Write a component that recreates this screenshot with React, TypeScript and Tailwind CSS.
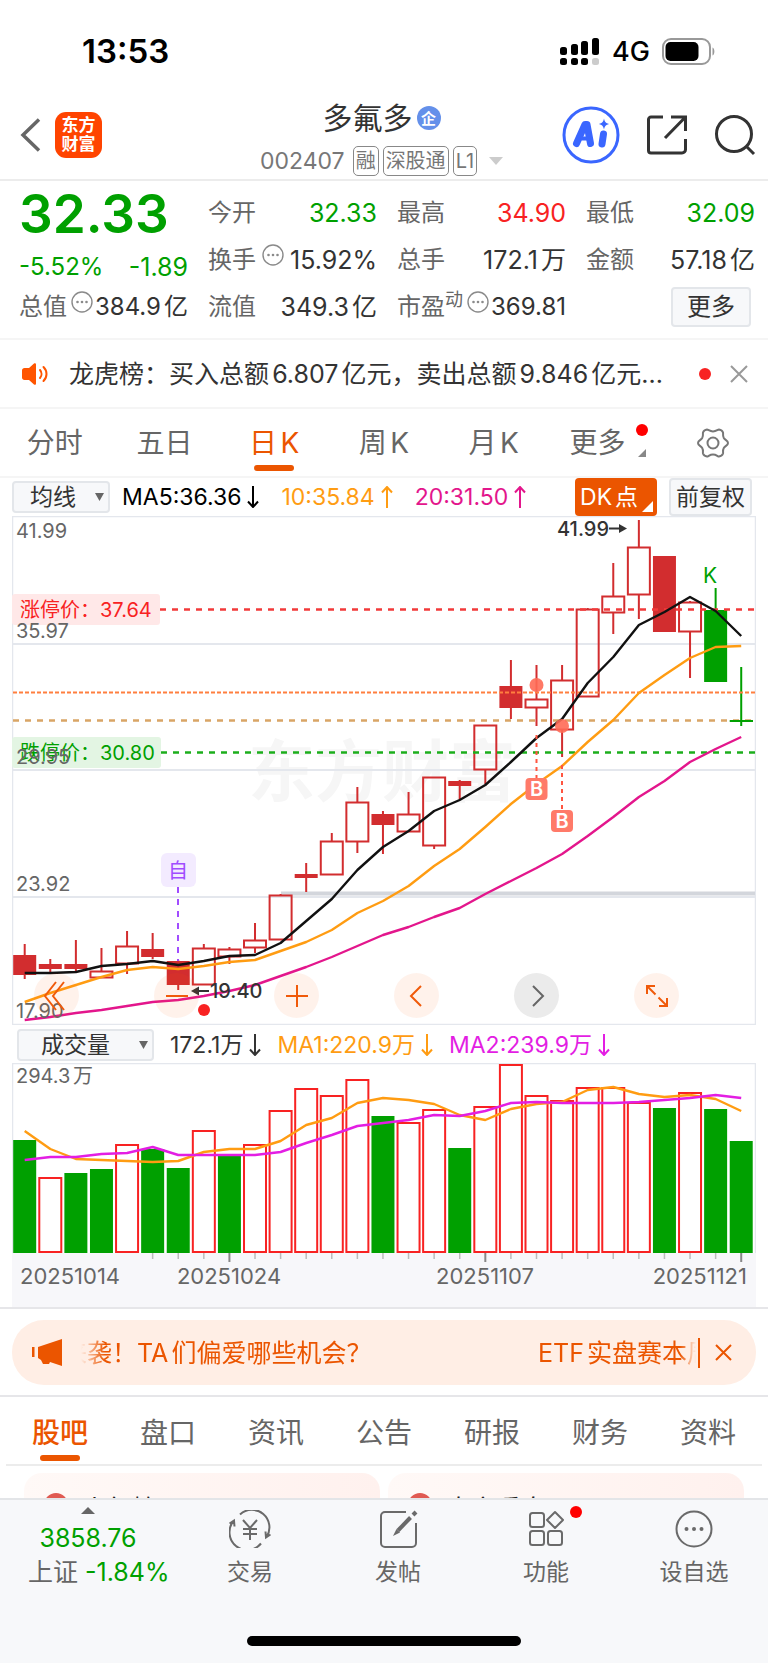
import { useState } from "react";
import type { ReactNode } from "react";
import { clsx } from "clsx";

const RED = "#d22d2f";
const GREEN = "#00a000";
const STEP = 25.59;
const FIRST_X = 24.7;
const BODY = 23;

const xAt = (i: number) => FIRST_X + i * STEP;
const toPoints = (ys: number[]) => ys.map((y, i) => `${xAt(i).toFixed(1)},${y}`).join(" ");

type Kind = "hollow" | "solid" | "down";
// high, body top, body bottom, low, kind
type Candle = [number, number, number, number, Kind];

const candles: Candle[] = [
  [944, 955, 975, 979, "solid"],
  [959, 964, 969, 972, "solid"],
  [940, 964, 969, 972, "solid"],
  [948, 971, 978, 978, "hollow"],
  [931, 946, 964, 974, "hollow"],
  [933, 949, 957, 959, "solid"],
  [960, 961, 985, 990, "solid"],
  [944, 948, 985, 985, "hollow"],
  [947, 949, 957, 964, "hollow"],
  [923, 940, 948, 953, "hollow"],
  [894, 895, 940, 940, "hollow"],
  [863, 874, 878, 892, "solid"],
  [833, 841, 875, 875, "hollow"],
  [787, 802, 842, 853, "hollow"],
  [811, 814, 825, 854, "solid"],
  [792, 814, 832, 832, "hollow"],
  [777, 777, 846, 849, "hollow"],
  [780, 781, 786, 800, "solid"],
  [725, 725, 770, 784, "hollow"],
  [660, 686, 708, 719, "solid"],
  [665, 699, 708, 726, "hollow"],
  [665, 680, 730, 757, "hollow"],
  [608, 609, 697, 697, "hollow"],
  [563, 596, 613, 634, "hollow"],
  [520, 547, 595, 619, "hollow"],
  [556, 556, 632, 632, "solid"],
  [601, 602, 632, 678, "hollow"],
  [588, 610, 682, 682, "down"],
  [667, 720, 722, 726, "down"],
];

const ma5 = [
  973, 973, 972, 966, 964, 961, 965, 961, 956, 955, 943, 921, 899, 870, 847, 831, 811, 800, 785, 762,
  738, 719, 683, 657, 625, 612, 597, 611, 636,
];
const ma10 = [
  1002, 993, 985, 977, 970, 967, 969, 966, 962, 960, 951, 942, 930, 913, 901, 886, 866, 849, 827, 804,
  784, 766, 742, 720, 693, 675, 658, 647, 646,
];
const ma20 = [
  1020, 1017, 1013, 1010, 1006, 1002, 1000, 996, 991, 985, 976, 967, 957, 946, 935, 927, 917, 908, 894,
  881, 868, 854, 836, 817, 797, 781, 762, 749, 737,
];

// bar top, rising
const volumes: [number, boolean][] = [
  [1140, false], [1178, true], [1173, false], [1169, false], [1145, true], [1149, false], [1168, false],
  [1131, true], [1155, false], [1145, true], [1111, true], [1089, true], [1096, true], [1080, true],
  [1116, false], [1123, true], [1110, true], [1148, false], [1107, true], [1065, true], [1096, true],
  [1101, true], [1088, true], [1088, true], [1103, true], [1108, false], [1093, true], [1109, false],
  [1141, false],
];
const volMa1 = [
  1131, 1149, 1159, 1160, 1161, 1162, 1161, 1152, 1149, 1149, 1141, 1125, 1118, 1103, 1098, 1100, 1104,
  1115, 1120, 1109, 1104, 1102, 1090, 1087, 1094, 1097, 1095, 1099, 1111,
];
const volMa2 = [
  1160, 1157, 1157, 1154, 1153, 1147, 1155, 1155, 1155, 1155, 1152, 1143, 1135, 1126, 1123, 1120, 1115,
  1116, 1111, 1103, 1102, 1103, 1103, 1103, 1102, 1100, 1098, 1095, 1098,
];

function MoreDot() {
  return (
    <svg viewBox="0 0 22 22" className="h-[22px] w-[22px] shrink-0 self-start" aria-hidden="true">
      <circle cx="11" cy="11" r="10" fill="none" stroke="#8a8a8a" strokeWidth="1.4" />
      <circle cx="6.5" cy="11" r="1.3" fill="#8a8a8a" />
      <circle cx="11" cy="11" r="1.3" fill="#8a8a8a" />
      <circle cx="15.5" cy="11" r="1.3" fill="#8a8a8a" />
    </svg>
  );
}

function StatusBar() {
  return (
    <div className="flex h-[88px] items-center justify-between pt-3.5 pl-[82px] pr-[52px] text-black">
      <span className="text-[33px] font-semibold leading-none">13:53</span>
      <div className="flex items-center gap-3">
        <svg viewBox="0 0 40 28" className="h-7 w-10" aria-hidden="true">
          <rect x="0" y="10" width="7" height="8" rx="2.5" />
          <rect x="11" y="7" width="7" height="11" rx="2.5" />
          <rect x="21" y="4" width="7" height="14" rx="2.5" />
          <rect x="32" y="1" width="7" height="17" rx="2.5" />
          <rect x="0" y="21" width="7" height="7" rx="2.5" />
          <rect x="11" y="21" width="7" height="7" rx="2.5" />
          <rect x="21" y="21" width="7" height="7" rx="2.5" />
          <rect x="32" y="21" width="7" height="7" rx="2.5" fill="#ccc" />
        </svg>
        <span className="text-[27px] font-medium leading-none">4G</span>
        <svg viewBox="0 0 54 27" className="h-[27px] w-[54px]" aria-hidden="true">
          <rect x="1" y="1" width="47" height="25" rx="8" fill="none" stroke="#999" strokeWidth="2" />
          <rect x="3.5" y="4" width="33" height="19" rx="5" />
          <path d="M50.500 9.500c2.500 1 2.500 7 0 8z" fill="#999" />
        </svg>
      </div>
    </div>
  );
}

function Tag({ children }: { children: ReactNode }) {
  return (
    <span className="flex h-[30px] items-center rounded-[5px] border-[1.5px] border-[#888] px-0.5 text-[20px] leading-none">
      {children}
    </span>
  );
}

function Header() {
  return (
    <header className="relative flex h-[93px] items-center justify-between border-b-2 border-[#ececec] pl-5 pr-3 pt-[3px]">
      <div className="flex items-center gap-3.5">
        <button type="button" aria-label="返回">
          <svg viewBox="0 0 21 34" className="h-[34px] w-[21px]" fill="none" stroke="#666" strokeWidth="3.500">
            <path d="M19 1.500 3 17l16 15.500" />
          </svg>
        </button>
        <a
          href="#home"
          className="grid h-[46px] w-[47px] place-content-center rounded-[11px] bg-[#ff4400] text-[17px] font-bold leading-[19px] text-white"
        >
          <span>东方</span>
          <span>财富</span>
        </a>
      </div>
      <div className="absolute left-[260px] top-2.5 flex flex-col items-center">
        <h1 className="flex items-center gap-1 text-[30px] leading-[40px] text-[#333]">
          多氟多
          <span className="grid h-6 w-6 place-content-center rounded-full bg-[#6490ea] text-[15px] font-bold leading-none text-white">
            企
          </span>
        </h1>
        <div className="mt-2 flex items-center gap-1 text-[#777]">
          <span className="mr-1 text-[23px] leading-[30px]">002407</span>
          <Tag>融</Tag>
          <Tag>深股通</Tag>
          <Tag>L1</Tag>
          <svg viewBox="0 0 14 8" className="ml-2 h-2 w-3.5" aria-hidden="true">
            <path d="M0 0h14L7 8z" fill="#ccc" />
          </svg>
        </div>
      </div>
      <div className="flex items-center gap-[26px]">
        <button type="button" aria-label="Ai">
          <svg viewBox="0 0 58 58" className="h-[58px] w-[58px]">
            <circle cx="29" cy="29" r="27" fill="none" stroke="#3a66ff" strokeWidth="3" />
            <g fill="none" stroke="#3a66ff" strokeLinecap="round" strokeLinejoin="round">
              <path d="m14.500 37.500 8.500-19h2l3.500 19" strokeWidth="7" />
              <path d="M20 32.500h7" strokeWidth="4" />
              <path d="m41.500 28-1.500 10" strokeWidth="7" />
            </g>
            <path d="M42 12.500c.8 3.500 1.800 4.500 5 5.500-3.200 1-4.200 2-5 5.500-.8-3.500-1.800-4.500-5-5.500 3.200-1 4.200-2 5-5.500z" fill="#3a66ff" />
          </svg>
        </button>
        <button type="button" aria-label="分享">
          <svg viewBox="0 0 42 42" className="h-[42px] w-[42px]" fill="none" stroke="#333" strokeWidth="3">
            <path d="M17 3H5a2.500 2.500 0 0 0-2.500 2.500v31A2.500 2.500 0 0 0 5 39h31a3.500 3.500 0 0 0 3.500-3.500V25M25 3h14.500v14M39 3.500 19 24" />
          </svg>
        </button>
        <button type="button" aria-label="搜索">
          <svg viewBox="0 0 42 42" className="h-[42px] w-[42px]" fill="none" stroke="#333" strokeWidth="3">
            <circle cx="20" cy="20" r="17.500" />
            <path d="m32 32 8 8" />
          </svg>
        </button>
      </div>
    </header>
  );
}

function Stat({
  label,
  value,
  tone = "text-[#333]",
  info,
  sup,
  compact,
}: {
  label: string;
  value: string;
  tone?: string;
  info?: boolean;
  sup?: string;
  compact?: boolean;
}) {
  return (
    <div className="flex h-[47px] items-center whitespace-nowrap">
      <dt className="flex h-8 items-center text-[#666]">
        {label}
        {sup && <sup className="self-start text-[18px] leading-none top-0">{sup}</sup>}
        {info && <span className={clsx("self-start", sup || compact ? "ml-1" : "ml-1.5")}><MoreDot /></span>}
      </dt>
      <dd className={clsx("ml-auto", tone, !compact && "text-[25px]")}>{value}</dd>
    </div>
  );
}

function Quote() {
  return (
    <section className="border-b-2 border-[#f5f5f5] pb-2 pl-[19px] pr-[13px] pt-2">
      <dl className="grid grid-cols-4 gap-x-5 text-[24px] leading-8">
        <div className="flex h-[47px] items-center pt-1 text-[53px] font-semibold leading-none text-[#00a000]">32.33</div>
        <Stat label="今开" value="32.33" tone="text-[#00a000]" />
        <Stat label="最高" value="34.90" tone="text-[#f82222]" />
        <Stat label="最低" value="32.09" tone="text-[#00a000]" />
        <div className="flex h-[47px] items-end justify-between text-[#00a000]">
          <span>-5.52%</span>
          <span className="text-[25px]">-1.89</span>
        </div>
        <Stat label="换手" value="15.92%" info />
        <Stat label="总手" value="172.1万" />
        <Stat label="金额" value="57.18亿" />
        <Stat label="总值" value="384.9亿" info compact />
        <Stat label="流值" value="349.3亿" />
        <Stat label="市盈" value="369.81" sup="动" info compact />
        <div className="flex items-center justify-end pr-1">
          <button type="button" className="h-10 w-20 rounded border-2 border-[#e3e6ea] bg-[#f7f8fa] leading-none text-[#333]">
            更多
          </button>
        </div>
      </dl>
    </section>
  );
}

function Notice() {
  return (
    <section className="flex h-[69px] items-center border-b-2 border-[#f5f5f5] pl-[22px] pr-5">
      <svg viewBox="0 0 26 22" className="mr-[21px] h-[22px] w-[26px] shrink-0" aria-hidden="true">
        <path d="M0 7.500C0 6 1 5 2.500 5H7l5-4.500c1.300-.8 2 0 2 1v19c0 1-.7 1.800-2 1L7 17H2.500C1 17 0 16 0 14.500z" fill="#ff5500" />
        <path d="M18 7c2 2.300 2 5.700 0 8M21.500 4c4 4 4 10 0 14" fill="none" stroke="#ff5500" strokeWidth="2" strokeLinecap="round" />
      </svg>
      <p className="min-w-0 flex-1 truncate text-[25px] leading-9 text-[#333]">
        龙虎榜：买入总额6.807亿元，卖出总额9.846亿元...
      </p>
      <span className="ml-[22px] h-3 w-3 shrink-0 rounded-full bg-[#f82222]" />
      <button type="button" aria-label="关闭" className="ml-[19px] shrink-0">
        <svg viewBox="0 0 18 18" className="h-[18px] w-[18px]" stroke="#999" strokeWidth="2">
          <path d="m1 1 16 16M17 1 1 17" />
        </svg>
      </button>
    </section>
  );
}

const periods = ["分时", "五日", "日K", "周K", "月K", "更多"];

function PeriodTabs() {
  const [active, setActive] = useState("日K");
  return (
    <nav className="grid h-[69px] grid-cols-7 border-b-2 border-[#f5f5f5] text-[28px]">
      {periods.map((p) => (
        <button
          key={p}
          type="button"
          onClick={() => setActive(p)}
          className={clsx("relative leading-none", active === p ? "text-[#eb5500]" : "text-[#666]", p === "更多" && "pr-3")}
        >
          {p}
          {active === p && (
            <span className="absolute bottom-[5px] left-1/2 h-1.5 w-10 -translate-x-1/2 rounded-full bg-[#eb5500]" />
          )}
          {p === "更多" && (
            <>
              <span className="absolute right-2.5 top-[15px] h-3 w-3 rounded-full bg-[#ff0000]" />
              <svg viewBox="0 0 8 8" className="absolute right-3 top-[40px] h-2 w-2">
                <path d="M8 0v8H0z" fill="#888" />
              </svg>
            </>
          )}
        </button>
      ))}
      <button type="button" aria-label="设置" className="grid place-content-center">
        <svg viewBox="0 0 34 32" className="h-8 w-[34px]" fill="none" stroke="#777" strokeWidth="2" strokeLinejoin="round">
          <path d="M11 2.500c1.500 0 2.500 2 6 2s4.500-2 6-2c1.500.2 3.500 1.500 4 3 .4 1.500-.6 3 .8 5.500 1.400 2.300 4.200 2.500 4.200 5s-2.800 2.700-4.200 5c-1.400 2.500-.4 4-.8 5.500-.5 1.500-2.500 2.800-4 3-1.500 0-2.500-2-6-2s-4.500 2-6 2c-1.500-.2-3.500-1.500-4-3-.4-1.500.6-3-.8-5.500C4.800 18.700 2 18.500 2 16s2.800-2.700 4.200-5C7.600 8.500 6.600 7 7 5.500c.5-1.500 2.500-2.800 4-3z" />
          <circle cx="17" cy="16" r="5.500" />
        </svg>
      </button>
    </nav>
  );
}

function Picker({ label, options, className }: { label: string; options: string[]; className: string }) {
  return (
    <div className="relative">
      <select
        aria-label={label}
        className={clsx(
          "block h-8 appearance-none rounded border-2 border-[#e3e6ea] bg-[#f7f8fa] text-[23px] leading-7 text-[#333]",
          className,
        )}
      >
        {options.map((o) => (
          <option key={o}>{o}</option>
        ))}
      </select>
      <svg viewBox="0 0 9 8" className="pointer-events-none absolute right-1.5 top-3 h-2 w-[9px]">
        <path d="M0 0h9L4.500 8z" fill="#666" />
      </svg>
    </div>
  );
}

function Arrow({ up }: { up?: boolean }) {
  return (
    <svg viewBox="0 0 12 22" className="h-[22px] w-3" fill="none" stroke="currentColor" strokeWidth="2" aria-hidden="true">
      <path d={up ? "M6 22V1M1 6.500 6 1l5 5.500" : "M6 0v21M1 15.500 6 21l5-5.500"} />
    </svg>
  );
}

function Reading({ children, up, tone }: { children: ReactNode; up?: boolean; tone: string }) {
  return (
    <span className={clsx("flex items-center gap-1.5 whitespace-nowrap leading-none [text-autospace:no-autospace]", tone)}>
      {children}
      <Arrow up={up} />
    </span>
  );
}

function PriceHeader() {
  return (
    <div className="flex h-[38px] items-center pl-3 pr-4 text-[23px]">
      <Picker label="均线" options={["均线", "BOLL"]} className="w-[98px] pl-4" />
      <div className="ml-3 flex gap-[22px]">
        <Reading tone="text-black">MA5:36.36</Reading>
        <Reading tone="text-[#ff9c12]" up>10:35.84</Reading>
        <Reading tone="text-[#e3168c]" up>20:31.50</Reading>
      </div>
      <button type="button" className="relative ml-auto h-[38px] w-[82px] rounded bg-[#eb5500] pr-3.5 leading-none text-white">
        DK点
        <svg viewBox="0 0 11 11" className="absolute bottom-1 right-1 h-[11px] w-[11px]">
          <path d="M11 0v11H0z" fill="#fff" />
        </svg>
      </button>
      <button type="button" className="ml-3 h-[38px] w-[83px] rounded border-2 border-[#e3e6ea] bg-[#f7f8fa] leading-none text-[#333]">
        前复权
      </button>
    </div>
  );
}

function CandleShape({ i, candle }: { i: number; candle: Candle }) {
  const [high, top, bottom, low, kind] = candle;
  const x = xAt(i);
  const color = kind === "down" ? GREEN : RED;
  return (
    <g stroke={color} strokeWidth="2">
      <path d={`M${x} ${high}V${top}M${x} ${bottom}V${low}`} />
      {kind === "hollow" ? (
        <rect x={x - BODY / 2 + 0.5} y={top + 0.5} width={BODY - 1} height={bottom - top - 1} fill="none" />
      ) : (
        <rect x={x - BODY / 2} y={top} width={BODY} height={bottom - top} fill={color} stroke="none" />
      )}
    </g>
  );
}

function BuyMark({ x, from, y, dot }: { x: number; from: number; y: number; dot: number }) {
  return (
    <g>
      <circle cx={x} cy={dot} r="7" fill="#ff6a55" fillOpacity="0.9" />
      <path d={`M${x} ${from}V${y}`} stroke="#ff5540" strokeWidth="2" strokeDasharray="4 4" />
      <rect x={x - 11} y={y} width="22" height="22" rx="4" fill="#ff7a69" />
      <text x={x} y={y + 18} textAnchor="middle" fontSize="20" fontWeight="600" fill="#fff">B</text>
    </g>
  );
}

const zoomButtons = [
  { label: "快退", d: "M15 2 4 16l11 14M23 2 12 16l11 14" },
  { label: "缩小", d: "M5 16h22" },
  { label: "放大", d: "M5 16h22M16 5v22" },
  { label: "左移", d: "M20 6 10 16l10 10" },
  { label: "右移", d: "m12 6 10 10-10 10" },
  { label: "全屏", d: "M6 14V6h8M6.500 6.500l8 8M26 18v8h-8M25.500 25.500l-8-8" },
];

function PriceChart() {
  return (
    <div className="relative px-3">
      <svg viewBox="12 516 744 509" className="block w-full">
        <g fill="#f6f6f6" fontSize="67" fontWeight="700">
          <text x="248" y="796">东方财富</text>
        </g>
        <g stroke="#e4e7ed" strokeWidth="2">
          <path d="M12 644H756M12 770H756M12 897H756" />
          <rect x="12.500" y="516.500" width="743" height="508" fill="none" strokeWidth="1.500" />
        </g>
        <path d="M281 893.500H755" stroke="#d3d6dc" strokeWidth="4" />

        <rect x="12" y="594" width="148" height="31" rx="3" fill="#ffe8e8" />
        <rect x="12" y="737" width="149" height="31" rx="3" fill="#e3f5e3" />
        <g fontSize="20">
          <text x="20" y="617" fill="#f82222">涨停价：37.64</text>
          <text x="20" y="760" fill="#00a000">跌停价：30.80</text>
          <g fill="#666">
            <text x="16" y="538">41.99</text>
            <text x="16" y="638">35.97</text>
            <text x="16" y="764">29.95</text>
            <text x="16" y="891">23.92</text>
          </g>
        </g>

        {candles.map((c, i) => (
          <CandleShape key={i} i={i} candle={c} />
        ))}

        <g fill="none" strokeWidth="2">
          <path d="M160 609.500H755" stroke="#f23a3a" strokeWidth="2.500" strokeDasharray="6 6" />
          <path d="M13 692.500H755" stroke="#ff7f3f" strokeDasharray="4 2" />
          <path d="M13 720.500H755" stroke="#d9a566" strokeWidth="2.500" strokeDasharray="6 6" />
          <path d="M161 752.500H755" stroke="#1cae1c" strokeWidth="2.500" strokeDasharray="6 6" />
        </g>
        <path d="M730 721H753" stroke={GREEN} strokeWidth="2" />

        <g fill="none" strokeWidth="2.400" strokeLinejoin="round">
          <polyline points={toPoints(ma20)} stroke="#e3168c" />
          <polyline points={toPoints(ma10)} stroke="#ff9c12" />
          <polyline points={toPoints(ma5)} stroke="#111" />
        </g>

        <BuyMark x={536.5} dot={685} from={735} y={778} />
        <BuyMark x={562} dot={726} from={765} y={810} />

        <path d="M178 887V961" stroke="#a14dff" strokeWidth="2" strokeDasharray="6 6" />
        <rect x="161" y="853" width="35" height="34" rx="6" fill="#f3ebff" />
        <text x="178" y="878" textAnchor="middle" fontSize="20" fill="#a14dff">自</text>

        <text x="557" y="536" fontSize="20" fontWeight="500" fill="#333">41.99</text>
        <path d="M609 528.500h12" stroke="#333" strokeWidth="2" />
        <path d="m619 524 8 4.500-8 4.500z" fill="#333" />
        <text x="703" y="583" fontSize="21" fill={GREEN}>K</text>

        <path d="M197 991h12" stroke="#333" strokeWidth="2" />
        <path d="m199 986.500-8 4.500 8 4.500z" fill="#333" />
        <text x="210" y="998" fontSize="20" fontWeight="500" fill="#333">19.40</text>
        <circle cx="204" cy="1010" r="6" fill="#f82222" />
        <text x="16" y="1018" fontSize="20" fill="#666">17.90</text>
      </svg>
      <div className="absolute inset-x-0 bottom-[7px] flex justify-between pl-[34px] pr-[89px]">
        {zoomButtons.map((b) => (
          <button
            key={b.label}
            type="button"
            aria-label={b.label}
            className={clsx(
              "grid h-[45px] w-[45px] place-content-center rounded-full",
              b.label === "右移" ? "bg-[#ebebeb] text-[#666]" : "bg-[#ff5500]/8 text-[#f05a0a]",
            )}
          >
            <svg viewBox="0 0 32 32" className="h-8 w-8" fill="none" stroke="currentColor" strokeWidth="2">
              <path d={b.d} />
            </svg>
          </button>
        ))}
      </div>
    </div>
  );
}

function VolumeHeader() {
  return (
    <div className="flex h-[38px] items-center gap-4 pl-[17px] pt-0.5 text-[23px]">
      <Picker label="成交量" options={["成交量", "MACD", "KDJ"]} className="w-[137px] pl-[22px]" />
      <div className="flex gap-4">
        <Reading tone="text-[#333]">172.1万</Reading>
        <Reading tone="text-[#ff9c12]">MA1:220.9万</Reading>
        <Reading tone="text-[#e31ee3]">MA2:239.9万</Reading>
      </div>
    </div>
  );
}

function VolumeChart() {
  return (
    <div className="border-b-2 border-[#e6e6e9] px-3">
      <svg viewBox="12 1063 744 244" className="block w-full">
        <rect x="12" y="1253" width="744" height="54" fill="#f7f7fa" />
        <path d="M12.500 1253V1063.500H755.500V1253" fill="none" stroke="#e4e7ed" strokeWidth="1.500" />
        {volumes.map(([top, rising], i) =>
          rising ? (
            <rect key={i} x={xAt(i) - 11} y={top} width="22" height={1252 - top} fill="none" stroke="#f82222" strokeWidth="2" />
          ) : (
            <rect key={i} x={xAt(i) - 11.5} y={top} width="23" height={1253 - top} fill={GREEN} />
          ),
        )}
        {volumes.map((_, i) => {
          if (i < 5) return null;
          const major = i % 10 === 8;
          return (
            <path
              key={i}
              d={`M${xAt(i)} 1253v${major ? 9 : 6}`}
              stroke={major ? "#888" : "#bbb"}
              strokeWidth={major ? 2 : 1.5}
            />
          );
        })}
        <g fill="none" strokeWidth="2.400" strokeLinejoin="round">
          <polyline points={toPoints(volMa1)} stroke="#ff9c12" />
          <polyline points={toPoints(volMa2)} stroke="#e31ee3" />
        </g>
        <text x="16" y="1083" fontSize="20" fill="#666">294.3万</text>
        <g fontSize="22" fill="#666">
          <text x="20" y="1284">20251014</text>
          <text x="229" y="1284" textAnchor="middle">20251024</text>
          <text x="485" y="1284" textAnchor="middle">20251107</text>
          <text x="747" y="1284" textAnchor="end">20251121</text>
        </g>
      </svg>
    </div>
  );
}

function Promo() {
  return (
    <section className="border-b-2 border-[#e6e6e9] px-3 pb-2.5 pt-[11px] text-[#eb5500]">
      <div className="flex h-[65px] items-center rounded-[32px] bg-[#ffeee5] pl-5 pr-6 text-[25px]">
        <svg viewBox="0 0 31 27" className="h-[27px] w-[31px] shrink-0" fill="#eb5500" aria-hidden="true">
          <path d="M0 8h2.500v10H0zM6 8 30 0v27l-12-4-1 2h-6l-2-4-3-2z" />
        </svg>
        <div className="ml-[18px] flex min-w-0 flex-1 overflow-hidden whitespace-nowrap leading-9 [mask-image:linear-gradient(to_right,transparent,black_24px,black_calc(100%-16px),transparent)]">
          <p className="-ml-[19px] flex-1">来袭！TA们偏爱哪些机会？</p>
          <p className="w-[158px]">ETF实盘赛本周</p>
        </div>
        <span className="ml-0.5 h-[30px] w-0.5 bg-[#eb5500]" />
        <button type="button" aria-label="关闭公告" className="ml-[15px]">
          <svg viewBox="0 0 17 17" className="h-[17px] w-[17px]" stroke="currentColor" strokeWidth="2">
            <path d="m1 1 15 15M16 1 1 16" />
          </svg>
        </button>
      </div>
    </section>
  );
}

const sections = ["股吧", "盘口", "资讯", "公告", "研报", "财务", "资料"];

function SectionTabs() {
  const [active, setActive] = useState("股吧");
  return (
    <nav className="mx-1.5 grid h-[69px] grid-cols-7 border-b-2 border-[#ececec] text-[28px]">
      {sections.map((s) => (
        <button
          key={s}
          type="button"
          onClick={() => setActive(s)}
          className={clsx("relative pt-1 leading-none", active === s ? "font-medium text-[#eb5500]" : "text-[#666]")}
        >
          {s}
          {active === s && (
            <span className="absolute bottom-[3px] left-1/2 h-1.5 w-10 -translate-x-1/2 rounded-full bg-[#eb5500]" />
          )}
        </button>
      ))}
    </nav>
  );
}

function Cards() {
  return (
    <div className="grid grid-cols-2 gap-2 px-6 pt-[7px]">
      {["人气榜", "大家看盘"].map((title) => (
        <a
          key={title}
          href="#rank"
          className="flex h-24 items-start gap-3.5 rounded-[18px] bg-linear-to-r from-[#fff9f7] to-[#fff1ee] px-5 pt-5 text-[25px] leading-8 text-[#222]"
        >
          <span className="h-6 w-6 rounded-full bg-[#e05a52]" />
          {title}
        </a>
      ))}
    </div>
  );
}

const actions: { label: string; icon: ReactNode; dot?: boolean }[] = [
  {
    label: "交易",
    icon: (
      <>
        <path d="M11 4.500A17.500 17.500 0 0 1 37.500 27M32 33.500A17.500 17.500 0 0 1 4.500 11M.5 13.500l4.500-3 .5 6M41.500 24.500l-4.500 3-.5-6" />
        <path d="m14 10 7 8 7-8M14 19h14M14 24h14M21 18v12" />
      </>
    ),
  },
  {
    label: "发帖",
    icon: (
      <>
        <path d="M29 2H8a4 4 0 0 0-4 4v27a4 4 0 0 0 4 4h27a4 4 0 0 0 4-4V13" />
        <path d="M33.500 7.500 21 20.500" strokeWidth="4" />
        <path d="m16 26 3.500-7 3.500 3.500z" fill="#6a6a6a" stroke="none" />
        <path d="m36 5 3-3" strokeWidth="4" />
      </>
    ),
  },
  {
    label: "功能",
    dot: true,
    icon: (
      <>
        <rect x="5" y="3" width="14" height="14" rx="2.500" />
        <rect x="5" y="21" width="14" height="14" rx="2.500" />
        <rect x="23" y="21" width="14" height="14" rx="2.500" />
        <path d="m30 2 8 8-8 8-8-8z" strokeLinejoin="round" />
      </>
    ),
  },
  {
    label: "设自选",
    icon: (
      <>
        <circle cx="21" cy="19" r="17.500" />
        <path d="M13.500 19h.01M21 19h.01M28.500 19h.01" strokeWidth="4" strokeLinecap="round" />
      </>
    ),
  },
];

function BottomBar() {
  return (
    <footer className="h-[165px] shrink-0 border-t-2 border-[#e3e5e8] bg-[#f7f8fa]">
      <div className="grid h-[136px] grid-cols-[176px_repeat(4,1fr)] text-[23px] text-[#666]">
        <a href="#index" className="flex flex-col items-center pt-[7px] text-[25px]">
          <svg viewBox="0 0 14 7" className="h-[7px] w-3.5">
            <path d="M0 7h14L7 0z" fill="#666" />
          </svg>
          <span className="mt-2 leading-8 text-[#00a000]">3858.76</span>
          <span className="ml-7 mt-0.5 self-start whitespace-nowrap leading-8">
            上证 <span className="text-[#00a000]">-1.84%</span>
          </span>
        </a>
        {actions.map((a) => (
          <button key={a.label} type="button" className="relative flex flex-col items-center pt-2.5">
            <svg viewBox="0 0 42 38" className="h-[38px] w-[42px]" fill="none" stroke="#6a6a6a" strokeWidth="2">
              {a.icon}
            </svg>
            <span className="mt-2 leading-8">{a.label}</span>
            {a.dot && <span className="absolute left-[98px] top-1.5 h-3 w-3 rounded-full bg-[#ff0000]" />}
          </button>
        ))}
      </div>
      <div className="mx-auto h-2.5 w-[274px] rounded-full bg-black" />
    </footer>
  );
}

export default function App() {
  return (
    <div className="flex h-screen flex-col bg-white font-['Inter','Noto_Sans_CJK_SC',sans-serif] [text-autospace:normal]">
      <main className="min-h-0 flex-1 overflow-y-auto [scrollbar-width:none]">
        <StatusBar />
        <Header />
        <Quote />
        <Notice />
        <PeriodTabs />
        <PriceHeader />
        <PriceChart />
        <VolumeHeader />
        <VolumeChart />
        <Promo />
        <SectionTabs />
        <Cards />
      </main>
      <BottomBar />
    </div>
  );
}
